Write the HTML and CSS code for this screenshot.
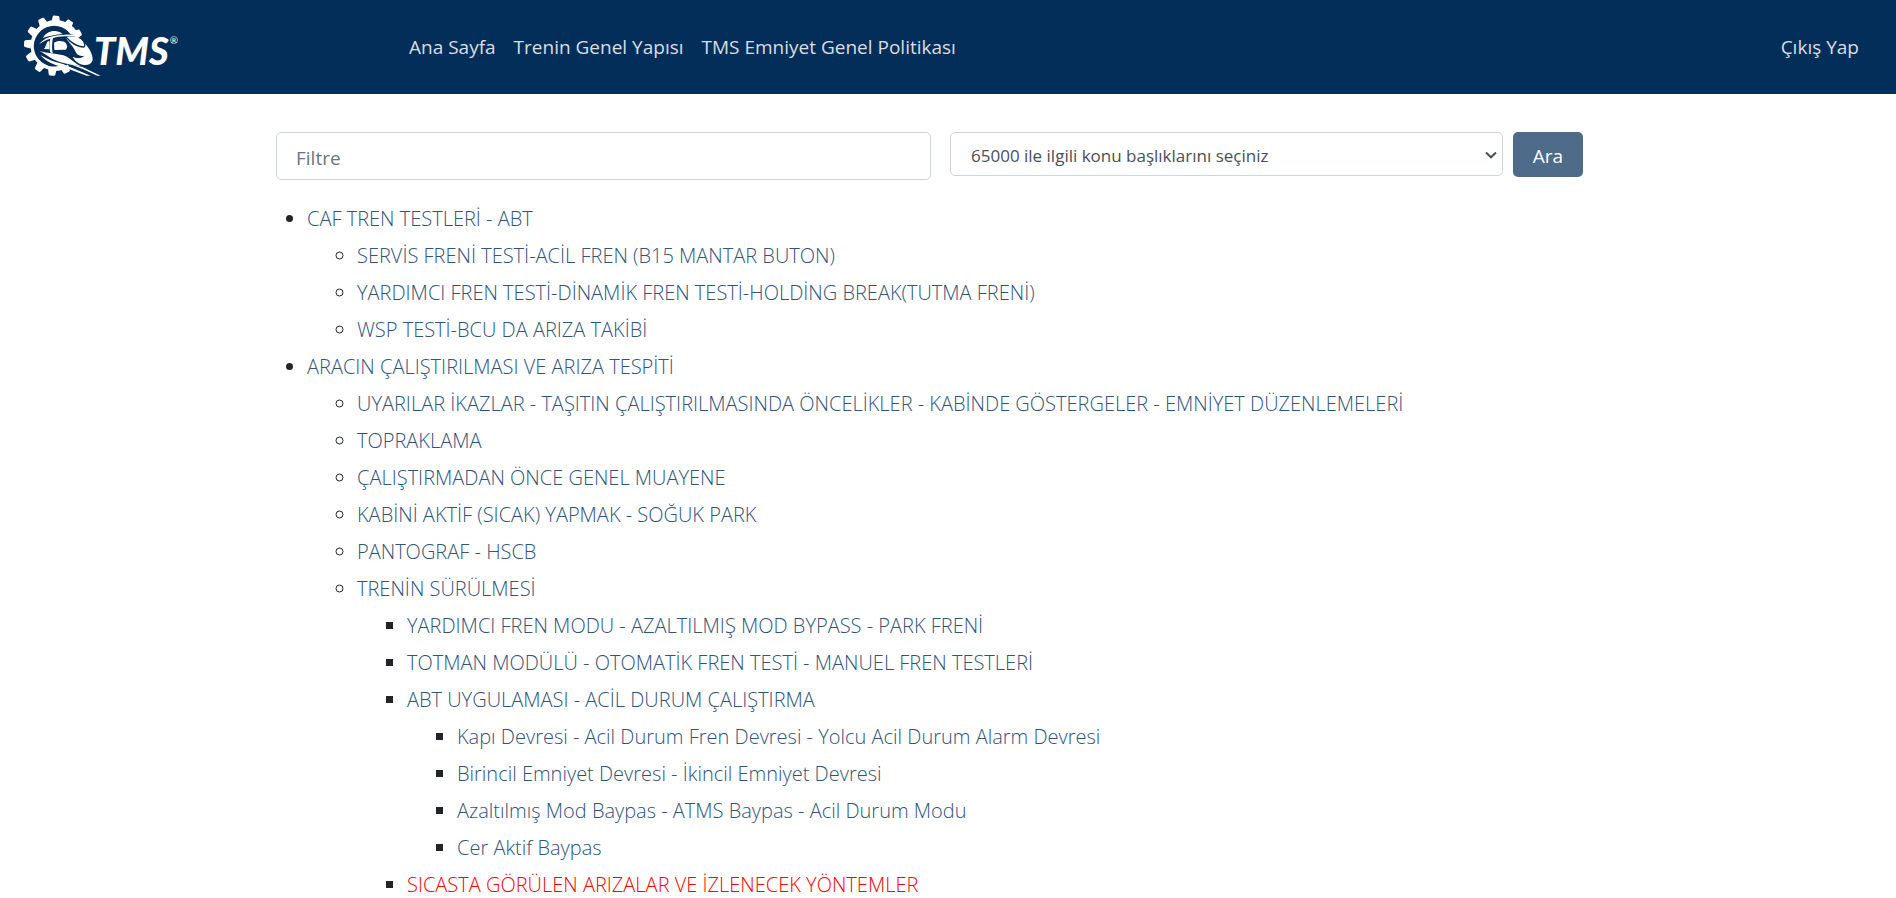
FILE: index.html
```html
<!DOCTYPE html>
<html lang="tr">
<head>
<meta charset="utf-8">
<meta name="viewport" content="width=device-width, initial-scale=1">
<title>TMS</title>
<link rel="stylesheet" href="styles.css">
</head>
<body>
<header class="navbar">
  <a class="brand" href="#" aria-label="TMS">
    <svg class="logo" viewBox="60 36 480 198" role="img" aria-hidden="true">
      <defs>
        <path id="tooth" d="M149 68 L152 50 Q153 47 156 47 L168 47 Q171 47 172 50 L175 68Z"/>
      </defs>
      <g fill="#fff">
        <g transform="rotate(4 162 137)">
          <use href="#tooth"/>
          <use href="#tooth" transform="rotate(30 162 137)"/>
          <use href="#tooth" transform="rotate(59 162 137)"/>
          <use href="#tooth" transform="rotate(150 162 137)"/>
          <use href="#tooth" transform="rotate(180 162 137)"/>
          <use href="#tooth" transform="rotate(210 162 137)"/>
          <use href="#tooth" transform="rotate(240 162 137)"/>
          <use href="#tooth" transform="rotate(270 162 137)"/>
          <use href="#tooth" transform="rotate(300 162 137)"/>
          <use href="#tooth" transform="rotate(330 162 137)"/>
        </g>
        <path d="M238 108 A76 76 0 1 0 204 203 L190 193 A61 61 0 1 1 212 103Z"/>
        <path d="M129 114 C137 98 151 92 166 93 C176 94 183 98 188 102 C167 104 147 108 129 114Z"/>
        <path d="M118 132 C130 114 158 105 196 104 C218 103 234 106 242 112 C218 108 188 108 168 112 C148 116 132 122 118 132Z"/>
        <path d="M151 115 L159 113 C156 128 155 142 158 160 L150 157 C148 142 148 128 151 115Z"/>
        <path d="M134 145 L142 125 L148 123 L148 148 L130 147Z"/>
        <path d="M162 128 C174 121 190 122 197 129 C203 137 203 144 197 149 L163 150Z"/>
        <path d="M200 111 C224 107 240 112 250 126 C252 132 254 136 251 139 C235 138 218 129 200 111Z"/>
        <path d="M198 113 C212 130 230 142 252 143 C258 140 257 134 254 130 C267 143 279 165 278 180 C275 192 263 197 248 194 C232 190 223 180 218 170 C230 176 247 175 253 167 C240 170 230 166 226 154 C220 138 206 128 198 113Z"/>
        <path d="M119 153 C143 160 169 160 190 166 C211 173 222 190 243 199 C211 194 187 190 165 180 C150 174 139 164 119 153Z"/>
        <path d="M122 166 C141 177 161 186 189 192 L272 227 L260 227 L190 201 C164 196 139 187 122 166Z"/>
        <path d="M209 192 L247 201 L302 227 L292 227 L248 207Z"/>
      </g>
      <text class="logo-name" x="282" y="195">TMS</text>
      <text class="logo-mark" x="509" y="132">®</text>
    </svg>
  </a>
  <nav class="nav-links">
    <a href="#">Ana Sayfa</a>
    <a href="#">Trenin Genel Yapısı</a>
    <a href="#">TMS Emniyet Genel Politikası</a>
  </nav>
  <a class="logout" href="#">Çıkış Yap</a>
</header>
<main class="content">
  <form class="search">
    <input class="field filter" type="text" placeholder="Filtre" aria-label="Filtre">
    <div class="select-wrap">
      <select class="field topic" aria-label="Konu başlığı">
        <option>65000 ile ilgili konu başlıklarını seçiniz</option>
      </select>
      <svg class="chevron" viewBox="0 0 12 8" aria-hidden="true"><path d="M1 1.5 L6 6.3 L11 1.5" fill="none" stroke="#495057" stroke-width="2"/></svg>
    </div>
    <button class="submit" type="button">Ara</button>
  </form>
  <ul class="topics">
    <li><a href="#">CAF TREN TESTLERİ - ABT</a>
      <ul>
        <li><a href="#">SERVİS FRENİ TESTİ-ACİL FREN (B15 MANTAR BUTON)</a></li>
        <li><a href="#">YARDIMCI FREN TESTİ-DİNAMİK FREN TESTİ-HOLDİNG BREAK(TUTMA FRENİ)</a></li>
        <li><a href="#">WSP TESTİ-BCU DA ARIZA TAKİBİ</a></li>
      </ul>
    </li>
    <li><a href="#">ARACIN ÇALIŞTIRILMASI VE ARIZA TESPİTİ</a>
      <ul>
        <li><a href="#">UYARILAR İKAZLAR - TAŞITIN ÇALIŞTIRILMASINDA ÖNCELİKLER - KABİNDE GÖSTERGELER - EMNİYET DÜZENLEMELERİ</a></li>
        <li><a href="#">TOPRAKLAMA</a></li>
        <li><a href="#">ÇALIŞTIRMADAN ÖNCE GENEL MUAYENE</a></li>
        <li><a href="#">KABİNİ AKTİF (SICAK) YAPMAK - SOĞUK PARK</a></li>
        <li><a href="#">PANTOGRAF - HSCB</a></li>
        <li><a href="#">TRENİN SÜRÜLMESİ</a>
          <ul>
            <li><a href="#">YARDIMCI FREN MODU - AZALTILMIŞ MOD BYPASS - PARK FRENİ</a></li>
            <li><a href="#">TOTMAN MODÜLÜ - OTOMATİK FREN TESTİ - MANUEL FREN TESTLERİ</a></li>
            <li><a href="#">ABT UYGULAMASI - ACİL DURUM ÇALIŞTIRMA</a>
              <ul>
                <li><a href="#">Kapı Devresi - Acil Durum Fren Devresi - Yolcu Acil Durum Alarm Devresi</a></li>
                <li><a href="#">Birincil Emniyet Devresi - İkincil Emniyet Devresi</a></li>
                <li><a href="#">Azaltılmış Mod Baypas - ATMS Baypas - Acil Durum Modu</a></li>
                <li><a href="#">Cer Aktif Baypas</a></li>
              </ul>
            </li>
            <li><a class="alert" href="#">SICASTA GÖRÜLEN ARIZALAR VE İZLENECEK YÖNTEMLER</a></li>
          </ul>
        </li>
      </ul>
    </li>
  </ul>
</main>
</body>
</html>
```
FILE: styles.css
```css
* { box-sizing: border-box; }
body {
  margin: 0;
  background: #fff;
  color: #212529;
  font-family: "Open Sans", "Noto Sans", sans-serif;
  font-size: 20px;
}
a { text-decoration: none; }
.navbar {
  display: flex;
  align-items: center;
  min-height: 94px;
  padding: 0 37px 0 20px;
  background: #032e59;
}
.brand { flex: 0 0 389px; padding-bottom: 4px; }
.logo { display: block; width: 160px; height: 66px; }
.logo-name { fill: #fff; font: italic 900 114px Lato, sans-serif; }
.logo-mark { fill: #fff; font: 30px Lato, sans-serif; }
.nav-links { display: flex; gap: 18px; }
.nav-links a, .logout { color: #d9dfe5; font-size: 19px; line-height: 30px; white-space: nowrap; }
.logout { margin-left: auto; }
.content { padding: 38px 313px 0 276px; }
.search {
  display: grid;
  grid-template-columns: 664fr 553fr 70px;
  column-gap: 10px;
  align-items: start;
}
.field {
  border: 1px solid #ced4da;
  border-radius: 5px;
  background: #fff;
  color: #495057;
  font-family: inherit;
}
.filter { height: 48px; margin-right: 9px; padding: 4px 19px 0; font-size: 19px; }
.filter::placeholder { color: #6c757d; opacity: 1; }
.select-wrap { position: relative; }
.topic {
  display: block;
  width: 100%;
  height: 44px;
  padding: 2px 20px 0;
  appearance: none;
  font-size: 17px;
}
.chevron { position: absolute; right: 6px; top: 19px; width: 12px; height: 8px; pointer-events: none; }
.submit {
  height: 45px;
  padding: 2px 0 0;
  border: 0;
  border-radius: 5px;
  background: #4e6b8a;
  color: #fff;
  font: 19px "Open Sans", "Noto Sans", sans-serif;
}
.topics { margin: 20px 0 0; padding-left: 31px; line-height: 37px; }
.topics ul { margin: 0; padding-left: 50px; }
.topics a { color: #2f547d; white-space: nowrap; font-weight: 300; }
.topics .alert { color: #f00; }
```
